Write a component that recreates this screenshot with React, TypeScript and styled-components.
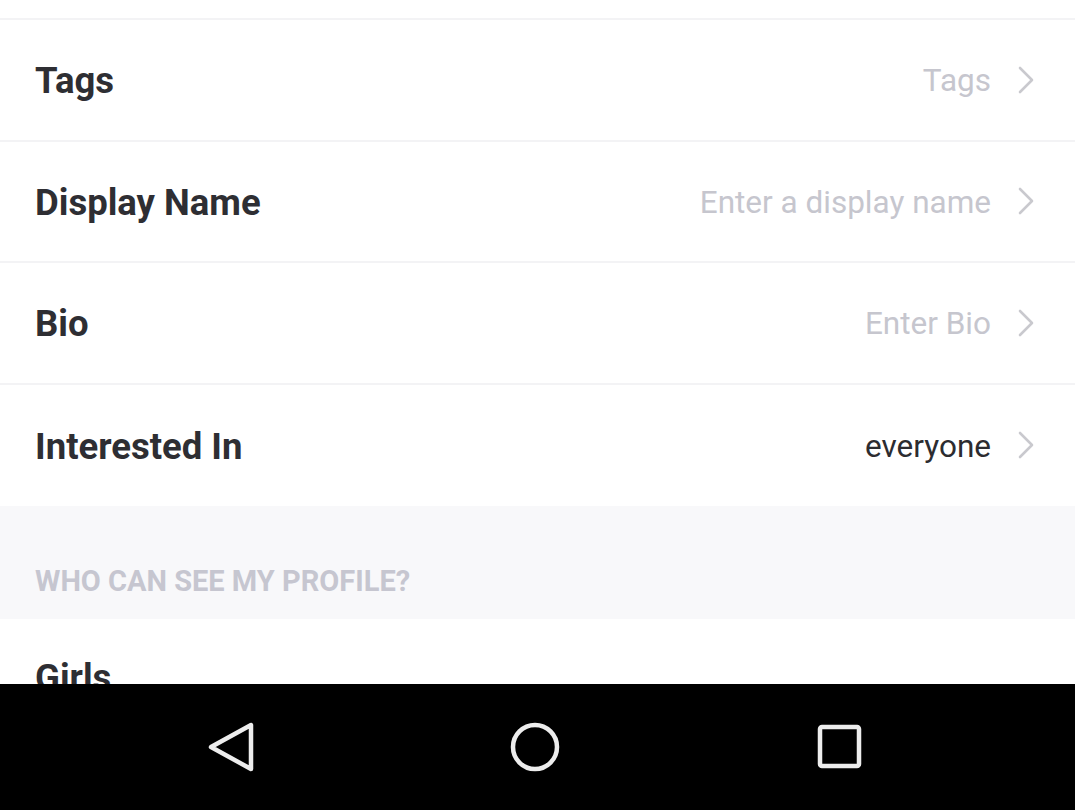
import React from 'react';
import styled, { createGlobalStyle } from 'styled-components';

const GlobalStyle = createGlobalStyle`
  html, body {
    margin: 0;
    padding: 0;
    background: #ffffff;
  }
  body {
    font-family: Roboto, "Liberation Sans", Arial, sans-serif;
    overflow: hidden;
  }
`;

const Screen = styled.div`
  width: 1075px;
  height: 810px;
  display: flex;
  flex-direction: column;
  overflow: hidden;
  background: #ffffff;
`;

const Content = styled.div`
  flex: 1;
  min-height: 0;
  overflow: hidden;
  display: flex;
  flex-direction: column;
`;

const TopGap = styled.div`
  height: 18px;
  flex-shrink: 0;
  border-bottom: 2px solid #f3f3f5;
`;

const Row = styled.div<{ last?: boolean }>`
  height: ${({ last }) => (last ? '121px' : '119.5px')};
  flex-shrink: 0;
  display: flex;
  align-items: center;
  padding: 0 40px 0 35px;
  border-bottom: ${({ last }) => (last ? 'none' : '2px solid #f3f3f5')};
`;

const Label = styled.div`
  flex: 1;
  font-size: 36.5px;
  font-weight: 700;
  color: #2e2e33;
  padding-top: 2px;
`;

const Value = styled.div<{ filled?: boolean }>`
  font-size: 31.5px;
  font-weight: 400;
  color: ${({ filled }) => (filled ? '#2c2c30' : '#c6c6ce')};
  margin-right: 26px;
  padding-top: 2px;
`;

const Chevron = styled.svg`
  width: 18px;
  height: 30px;
  flex-shrink: 0;
`;

const SectionHeader = styled.div`
  height: 113px;
  flex-shrink: 0;
  background: #f8f8fa;
  display: flex;
  align-items: flex-end;
  padding: 0 35px 21px;
  box-sizing: border-box;
  font-size: 29px;
  font-weight: 700;
  color: #c6c6d0;
`;

const CutRow = styled.div`
  height: 80px;
  flex-shrink: 0;
  padding: 37px 35px 0;
  box-sizing: border-box;
  font-size: 36.5px;
  font-weight: 700;
  color: #2e2e33;
`;

const NavBar = styled.div`
  height: 126px;
  flex-shrink: 0;
  background: #000000;
  display: flex;
  align-items: center;
  justify-content: center;
  gap: 252px;
  padding-right: 6px;
`;

const NavIcon = styled.svg`
  width: 52px;
  height: 52px;
  flex-shrink: 0;
`;

const ChevronIcon = () => (
  <Chevron viewBox="0 0 18 30">
    <path d="M3 3 L15 15 L3 27" fill="none" stroke="#c9c9ce" strokeWidth="2.6" strokeLinecap="round" strokeLinejoin="round" />
  </Chevron>
);

interface Field {
  label: string;
  value: string;
  filled?: boolean;
}

const fields: Field[] = [
  { label: 'Tags', value: 'Tags' },
  { label: 'Display Name', value: 'Enter a display name' },
  { label: 'Bio', value: 'Enter Bio' },
  { label: 'Interested In', value: 'everyone', filled: true },
];

const App = () => (
  <Screen>
    <GlobalStyle />
    <Content>
      <TopGap />
      {fields.map((f, i) => (
        <Row key={f.label} last={i === fields.length - 1}>
          <Label>{f.label}</Label>
          <Value filled={f.filled}>{f.value}</Value>
          <ChevronIcon />
        </Row>
      ))}
      <SectionHeader>WHO CAN SEE MY PROFILE?</SectionHeader>
      <CutRow>Girls</CutRow>
    </Content>
    <NavBar>
      <NavIcon viewBox="0 0 52 52">
        <path d="M46 4 L46 48 L6 26 Z" fill="none" stroke="#ededed" strokeWidth="4.5" strokeLinejoin="round" />
      </NavIcon>
      <NavIcon viewBox="0 0 52 52">
        <circle cx="26" cy="26" r="22" fill="none" stroke="#ededed" strokeWidth="4.5" />
      </NavIcon>
      <NavIcon viewBox="0 0 52 52">
        <rect x="7" y="6" width="39" height="39" rx="2" fill="none" stroke="#ededed" strokeWidth="4.5" />
      </NavIcon>
    </NavBar>
  </Screen>
);

export default App;
